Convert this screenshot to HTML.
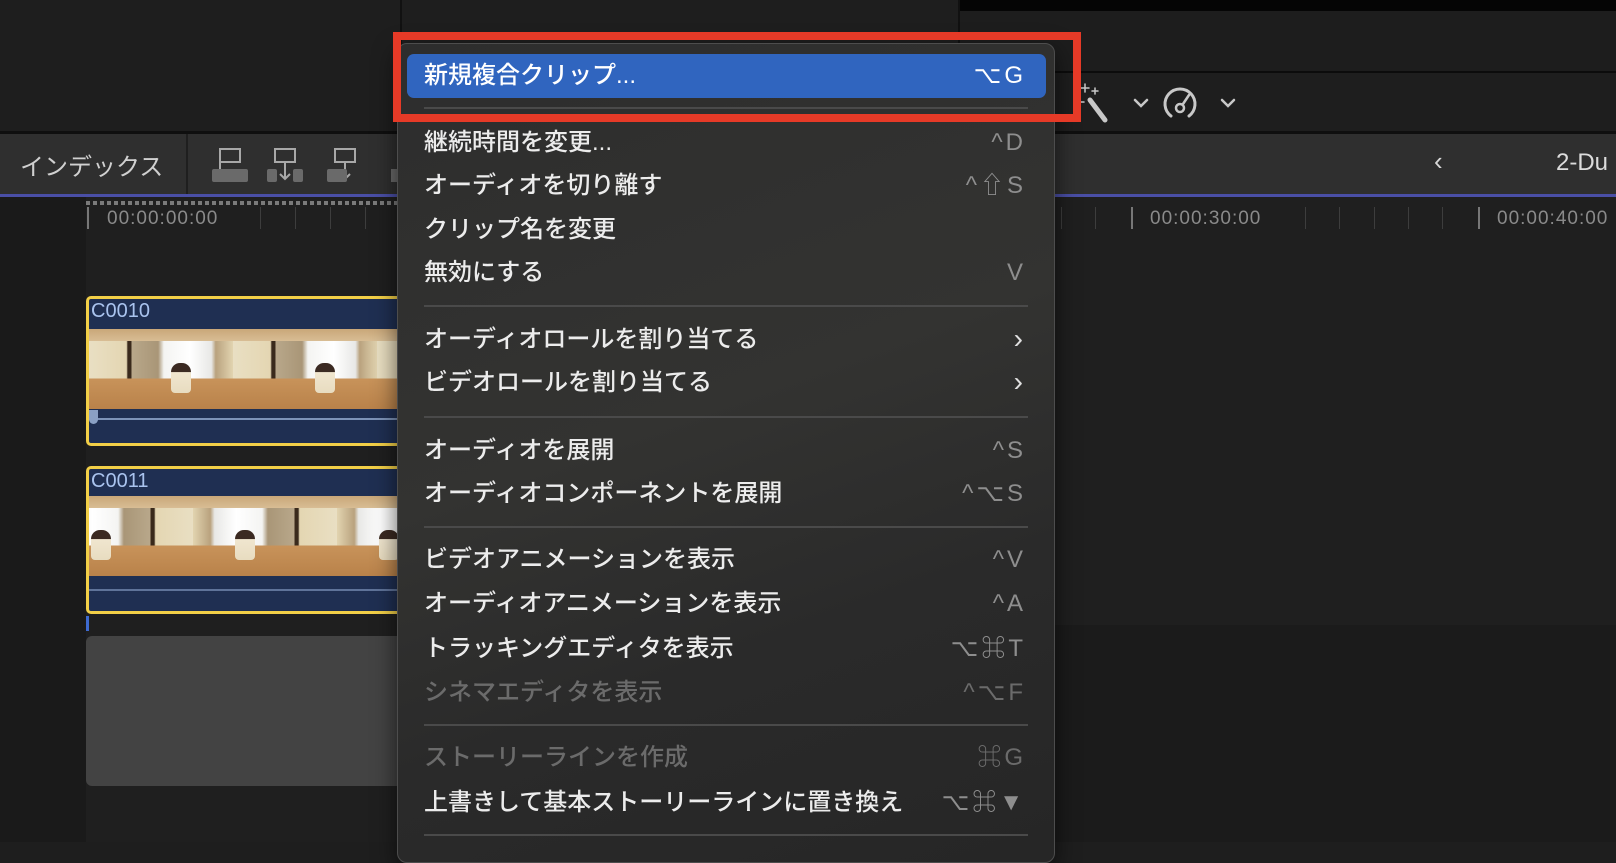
<!DOCTYPE html>
<html><head><meta charset="utf-8"><style>
*{margin:0;padding:0;box-sizing:border-box}
body{width:1616px;height:842px;background:#1e1e1e;position:relative;overflow:hidden;font-family:"Liberation Sans","Noto Sans CJK JP",sans-serif}
.a{position:absolute}
.mi{position:absolute;left:424px;font-size:24px;color:#ececec;line-height:30px;white-space:nowrap;font-weight:500}
.sc{position:absolute;right:590px;font-size:24px;color:#8e8e8e;line-height:30px;white-space:nowrap;letter-spacing:3px}
.dis{color:#6b6b6b}
.sep{position:absolute;left:424px;width:604px;height:2px;background:#4a4a4a}
.frame{position:absolute;top:0;width:144px;height:80px;overflow:hidden;
background:
linear-gradient(180deg,rgba(0,0,0,0) 0,rgba(0,0,0,0) 62%,#c8935a 62%,#b9824a 100%) ,
linear-gradient(90deg,#e9dfc3 0,#e4d6b2 26%,#3a2a1c 27%,#3a2a1c 29%,#b8a78a 30%,#a99677 48%,#f4f4f2 52%,#ffffff 70%,#e8e8e6 85%,#b9a27e 88%,#e2d4b0 100%)}
.frame::before{content:"";position:absolute;left:0;top:0;width:144px;height:12px;background:linear-gradient(180deg,#c9a779,#d8bd94)}
.frame::after{content:"";position:absolute;left:82px;top:34px;width:20px;height:30px;border-radius:9px 9px 4px 4px;background:linear-gradient(180deg,#3b2a22 0,#3b2a22 30%,#f0e6cf 31%,#e8dcc0 100%)}
</style></head><body>
<div class="a" style="left:0;top:0;width:400px;height:131px;background:#1e1e1e"></div>
<div class="a" style="left:400px;top:0;width:2px;height:131px;background:#111"></div>
<div class="a" style="left:960px;top:0;width:656px;height:11px;background:#050505"></div>
<div class="a" style="left:958px;top:0;width:2px;height:72px;background:#111"></div>
<div class="a" style="left:960px;top:11px;width:656px;height:61px;background:#1d1d1d"></div>
<div class="a" style="left:960px;top:71px;width:656px;height:2px;background:#0c0c0c"></div>
<div class="a" style="left:0;top:131px;width:1616px;height:3px;background:#0f0f0f"></div>
<svg class="a" style="left:1075px;top:80px" width="180" height="45" viewBox="0 0 180 45" fill="none" stroke="#c8c8c8" stroke-linecap="round">
<path d="M15 20 L30 40" stroke-width="5"/>
<path d="M10 4v8M6 8h8M17 11h6M20 8v6M4 22h5" stroke-width="1.5"/>
<path d="M60 20l6 6 6-6" stroke-width="2.5"/>
<path d="M96 36a15 15 0 1 1 18 0" stroke-width="3"/>
<circle cx="105" cy="28" r="4" stroke-width="2.5"/>
<path d="M108 24l6-9" stroke-width="2.5"/>
<path d="M147 20l6 6 6-6" stroke-width="2.5"/>
</svg>
<div class="a" style="left:0;top:134px;width:1616px;height:60px;background:#2f2f2f"></div>
<div class="a" style="left:186px;top:134px;width:2px;height:60px;background:#1f1f1f"></div>
<div class="a" style="left:20px;top:147px;font-size:24px;color:#d0d0d0">インデックス</div>
<svg class="a" style="left:205px;top:145px" width="200" height="42" viewBox="0 0 200 42" fill="none" stroke="#a8a8a8" stroke-width="2">
<rect x="15" y="4" width="20" height="13"/><path d="M15 17v10"/><rect x="7" y="24" width="36" height="13" fill="#6a6a6a" stroke="none" rx="2"/>
<rect x="70" y="4" width="20" height="13"/><path d="M80 17v17M75 29l5 5 5-5"/><rect x="62" y="24" width="10" height="13" fill="#6a6a6a" stroke="none" rx="2"/><rect x="88" y="24" width="10" height="13" fill="#6a6a6a" stroke="none" rx="2"/>
<rect x="130" y="4" width="20" height="13"/><path d="M140 17v17M135 29l5 5 5-5"/><rect x="122" y="24" width="20" height="13" fill="#6a6a6a" stroke="none" rx="2"/>
<rect x="186" y="24" width="6" height="13" fill="#6a6a6a" stroke="none"/>
</svg>
<div class="a" style="left:1434px;top:146px;font-size:26px;color:#d8d8d8">‹</div>
<div class="a" style="left:1556px;top:149px;font-size:24px;color:#dcdcdc">2-Du</div>
<div class="a" style="left:0;top:194px;width:1616px;height:3px;background:#4a4fa6"></div>
<div class="a" style="left:0;top:197px;width:86px;height:645px;background:#1a1a1a"></div>
<div class="a" style="left:86px;top:197px;width:1530px;height:645px;background:#1f1f1f"></div>
<div class="a" style="left:86px;top:201px;width:311px;height:4px;background:repeating-linear-gradient(90deg,#7a7a7a 0,#7a7a7a 4px,transparent 4px,transparent 7px)"></div>
<div class="a" style="left:87px;top:207px;width:2px;height:22px;background:#777"></div>
<div class="a" style="left:107px;top:208px;font-size:19px;color:#8a8a8a;letter-spacing:1px">00:00:00:00</div>
<div class="a" style="left:260px;top:207px;width:1px;height:22px;background:#3d3d3d"></div>
<div class="a" style="left:295px;top:207px;width:1px;height:22px;background:#3d3d3d"></div>
<div class="a" style="left:330px;top:207px;width:1px;height:22px;background:#3d3d3d"></div>
<div class="a" style="left:365px;top:207px;width:1px;height:22px;background:#3d3d3d"></div>
<div class="a" style="left:1061px;top:207px;width:1px;height:22px;background:#3d3d3d"></div>
<div class="a" style="left:1095px;top:207px;width:1px;height:22px;background:#3d3d3d"></div>
<div class="a" style="left:1131px;top:207px;width:2px;height:22px;background:#777"></div>
<div class="a" style="left:1150px;top:208px;font-size:19px;color:#8a8a8a;letter-spacing:1px">00:00:30:00</div>
<div class="a" style="left:1305px;top:207px;width:1px;height:22px;background:#3d3d3d"></div>
<div class="a" style="left:1339px;top:207px;width:1px;height:22px;background:#3d3d3d"></div>
<div class="a" style="left:1374px;top:207px;width:1px;height:22px;background:#3d3d3d"></div>
<div class="a" style="left:1408px;top:207px;width:1px;height:22px;background:#3d3d3d"></div>
<div class="a" style="left:1442px;top:207px;width:1px;height:22px;background:#3d3d3d"></div>
<div class="a" style="left:1478px;top:207px;width:2px;height:22px;background:#777"></div>
<div class="a" style="left:1497px;top:208px;font-size:19px;color:#8a8a8a;letter-spacing:1px">00:00:40:00</div>
<div class="a" style="left:1055px;top:625px;width:561px;height:217px;background:#1b1b1b"></div>
<div class="a" style="left:86px;top:296px;width:320px;height:150px;background:#1f2f52;border:3px solid #f2cf47;border-radius:5px;overflow:hidden">
 <div class="a" style="left:2px;top:1px;font-size:20px;color:#a9c3ee">C0010</div>
 <div class="a" style="left:0;top:30px;width:320px;height:80px">
  <div class="frame" style="left:0"></div><div class="frame" style="left:144px"></div><div class="frame" style="left:288px"></div>
 </div>
 <div class="a" style="left:0;top:119px;width:320px;height:2px;background:#7d93b8"></div>
 <div class="a" style="left:0;top:111px;width:9px;height:14px;border-radius:0 0 5px 5px;background:#8aa0c4"></div>
</div>
<div class="a" style="left:86px;top:466px;width:320px;height:148px;background:#1f2f52;border:3px solid #f2cf47;border-radius:5px;overflow:hidden">
 <div class="a" style="left:2px;top:1px;font-size:20px;color:#a9c3ee">C0011</div>
 <div class="a" style="left:0;top:27px;width:320px;height:80px">
  <div class="frame" style="left:-40px;transform:scaleX(-1)"></div><div class="frame" style="left:104px;transform:scaleX(-1)"></div><div class="frame" style="left:248px;transform:scaleX(-1)"></div>
 </div>
 <div class="a" style="left:0;top:120px;width:320px;height:2px;background:#5f7399"></div>
</div>
<div class="a" style="left:86px;top:616px;width:3px;height:15px;background:#3d6ad0"></div>
<div class="a" style="left:86px;top:636px;width:320px;height:150px;background:#434343;border-radius:6px"></div>
<div class="a" style="left:397px;top:43px;width:658px;height:820px;background:linear-gradient(160deg,#2d2d2d 0%,#333331 45%,#2a2a2a 70%,#262626 100%);border:1px solid #4d4d4d;border-radius:10px;box-shadow:0 8px 24px rgba(0,0,0,.6)"></div>
<div class="a" style="left:407px;top:54px;width:639px;height:44px;background:#3065bf;border-radius:7px"></div>
<div class="mi" style="top:61px;color:#fff">新規複合クリップ...</div>
<div class="sc" style="top:61px;color:#fff">⌥G</div>
<div class="sep" style="top:107px"></div>
<div class="mi" style="top:128px">継続時間を変更...</div><div class="sc" style="top:128px">^D</div>
<div class="mi" style="top:171px">オーディオを切り離す</div><div class="sc" style="top:171px">^⇧S</div>
<div class="mi" style="top:215px">クリップ名を変更</div>
<div class="mi" style="top:258px">無効にする</div><div class="sc" style="top:258px">V</div>
<div class="sep" style="top:305px"></div>
<div class="mi" style="top:325px">オーディオロールを割り当てる</div><div class="sc" style="top:324px;color:#e0e0e0;font-size:28px">›</div>
<div class="mi" style="top:368px">ビデオロールを割り当てる</div><div class="sc" style="top:367px;color:#e0e0e0;font-size:28px">›</div>
<div class="sep" style="top:416px"></div>
<div class="mi" style="top:436px">オーディオを展開</div><div class="sc" style="top:436px">^S</div>
<div class="mi" style="top:479px">オーディオコンポーネントを展開</div><div class="sc" style="top:479px">^⌥S</div>
<div class="sep" style="top:526px"></div>
<div class="mi" style="top:545px">ビデオアニメーションを表示</div><div class="sc" style="top:545px">^V</div>
<div class="mi" style="top:589px">オーディオアニメーションを表示</div><div class="sc" style="top:589px">^A</div>
<div class="mi" style="top:634px">トラッキングエディタを表示</div><div class="sc" style="top:634px">⌥⌘T</div>
<div class="mi dis" style="top:678px">シネマエディタを表示</div><div class="sc dis" style="top:678px">^⌥F</div>
<div class="sep" style="top:724px"></div>
<div class="mi dis" style="top:743px">ストーリーラインを作成</div><div class="sc dis" style="top:743px">⌘G</div>
<div class="mi" style="top:788px">上書きして基本ストーリーラインに置き換え</div><div class="sc" style="top:788px">⌥⌘▼</div>
<div class="sep" style="top:834px"></div>
<div class="a" style="left:393px;top:32px;width:688px;height:90px;border:8px solid #e63a27"></div>
</body></html>
